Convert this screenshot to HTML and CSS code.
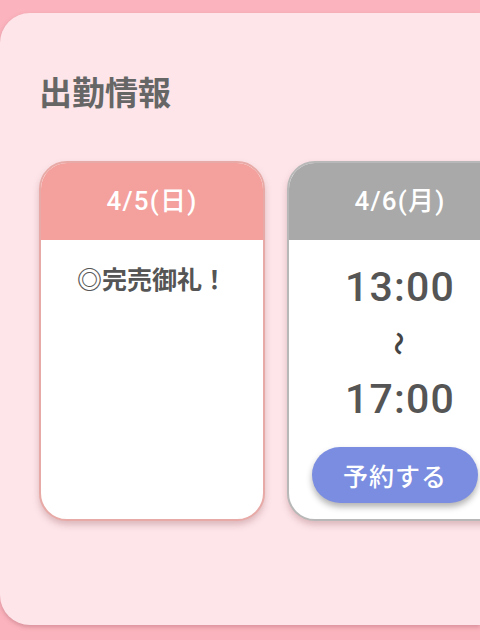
FILE: index.html
```html
<!DOCTYPE html>
<html lang="ja">
<head>
<meta charset="utf-8">
<link rel="stylesheet" href="styles.css">
</head>
<body>
<div class="panel">
  <h2 class="title">出勤情報</h2>
  <div class="cards">
    <div class="card card-sun">
      <div class="card-head">4/5(日)</div>
      <div class="card-body">
        <p class="note">◎完売御礼！</p>
      </div>
    </div>
    <div class="card card-mon">
      <div class="card-head">4/6(月)</div>
      <div class="card-body">
        <p class="time">13:00</p>
        <p class="tilde"><span>〜</span></p>
        <p class="time">17:00</p>
        <button class="reserve">予約する</button>
      </div>
    </div>
  </div>
</div>
</body>
</html>
```

FILE: styles.css
```css
html, body {
  margin: 0;
  padding: 0;
}
body {
  width: 480px;
  height: 640px;
  overflow: hidden;
  background: #fbb3bd;
  font-family: "Noto Sans CJK JP", "Noto Sans", sans-serif;
}
.panel {
  margin-top: 13px;
  width: 100%;
  height: 612px;
  box-sizing: border-box;
  background: #fde5e9;
  border-radius: 30px 0 0 30px;
  box-shadow: 0 2px 4px rgba(150, 80, 90, 0.35);
  padding: 58px 0 0 39px;
  overflow: hidden;
}
.title {
  margin: 0;
  font-size: 33px;
  line-height: 40px;
  font-weight: 700;
  color: #666;
}
.cards {
  display: flex;
  gap: 22px;
  margin-top: 50px;
}
.card {
  width: 226px;
  height: 360px;
  box-sizing: border-box;
  border: 2px solid #e8aaa6;
  border-radius: 28px;
  background: #fff;
  overflow: hidden;
  flex: none;
  box-shadow: 0 4px 6px rgba(160, 100, 105, 0.35);
}
.card-mon {
  border-color: #b8b8b8;
}
.card-head {
  height: 77px;
  background: #f4a19e;
  color: #fff;
  font-family: Roboto, "Noto Sans CJK JP", sans-serif;
  font-size: 26px;
  font-weight: 500;
  letter-spacing: 1.2px;
  line-height: 77px;
  text-align: center;
}
.card-mon .card-head {
  background: #a9a9a9;
}
.card-body {
  display: flex;
  flex-direction: column;
  align-items: center;
}
.card-sun .card-body {
  padding-top: 20px;
}
.note {
  margin: 0;
  font-size: 25px;
  line-height: 36px;
  font-weight: 700;
  color: #555;
}
.card-mon .card-body {
  padding-top: 19px;
}
.time {
  margin: 0;
  font-family: Roboto, "Noto Sans CJK JP", sans-serif;
  font-size: 41px;
  line-height: 56px;
  font-weight: 500;
  letter-spacing: 1.2px;
  color: #555;
}
.tilde {
  margin: 0;
  height: 56px;
  display: flex;
  align-items: center;
  justify-content: center;
  color: #444;
  font-size: 24px;
  font-weight: 700;
}
.tilde span {
  display: inline-block;
  transform: rotate(90deg);
}
.reserve {
  align-self: flex-start;
  margin: 20px 0 0 23px;
  width: 166px;
  height: 56px;
  border: none;
  border-radius: 28px;
  background: #7a8de0;
  color: #fff;
  font-family: "Noto Sans CJK JP", "Noto Sans", sans-serif;
  font-size: 25px;
  font-weight: 500;
  letter-spacing: 1px;
  box-shadow: 0 4px 6px rgba(0, 0, 0, 0.3);
  padding: 0;
}
```
